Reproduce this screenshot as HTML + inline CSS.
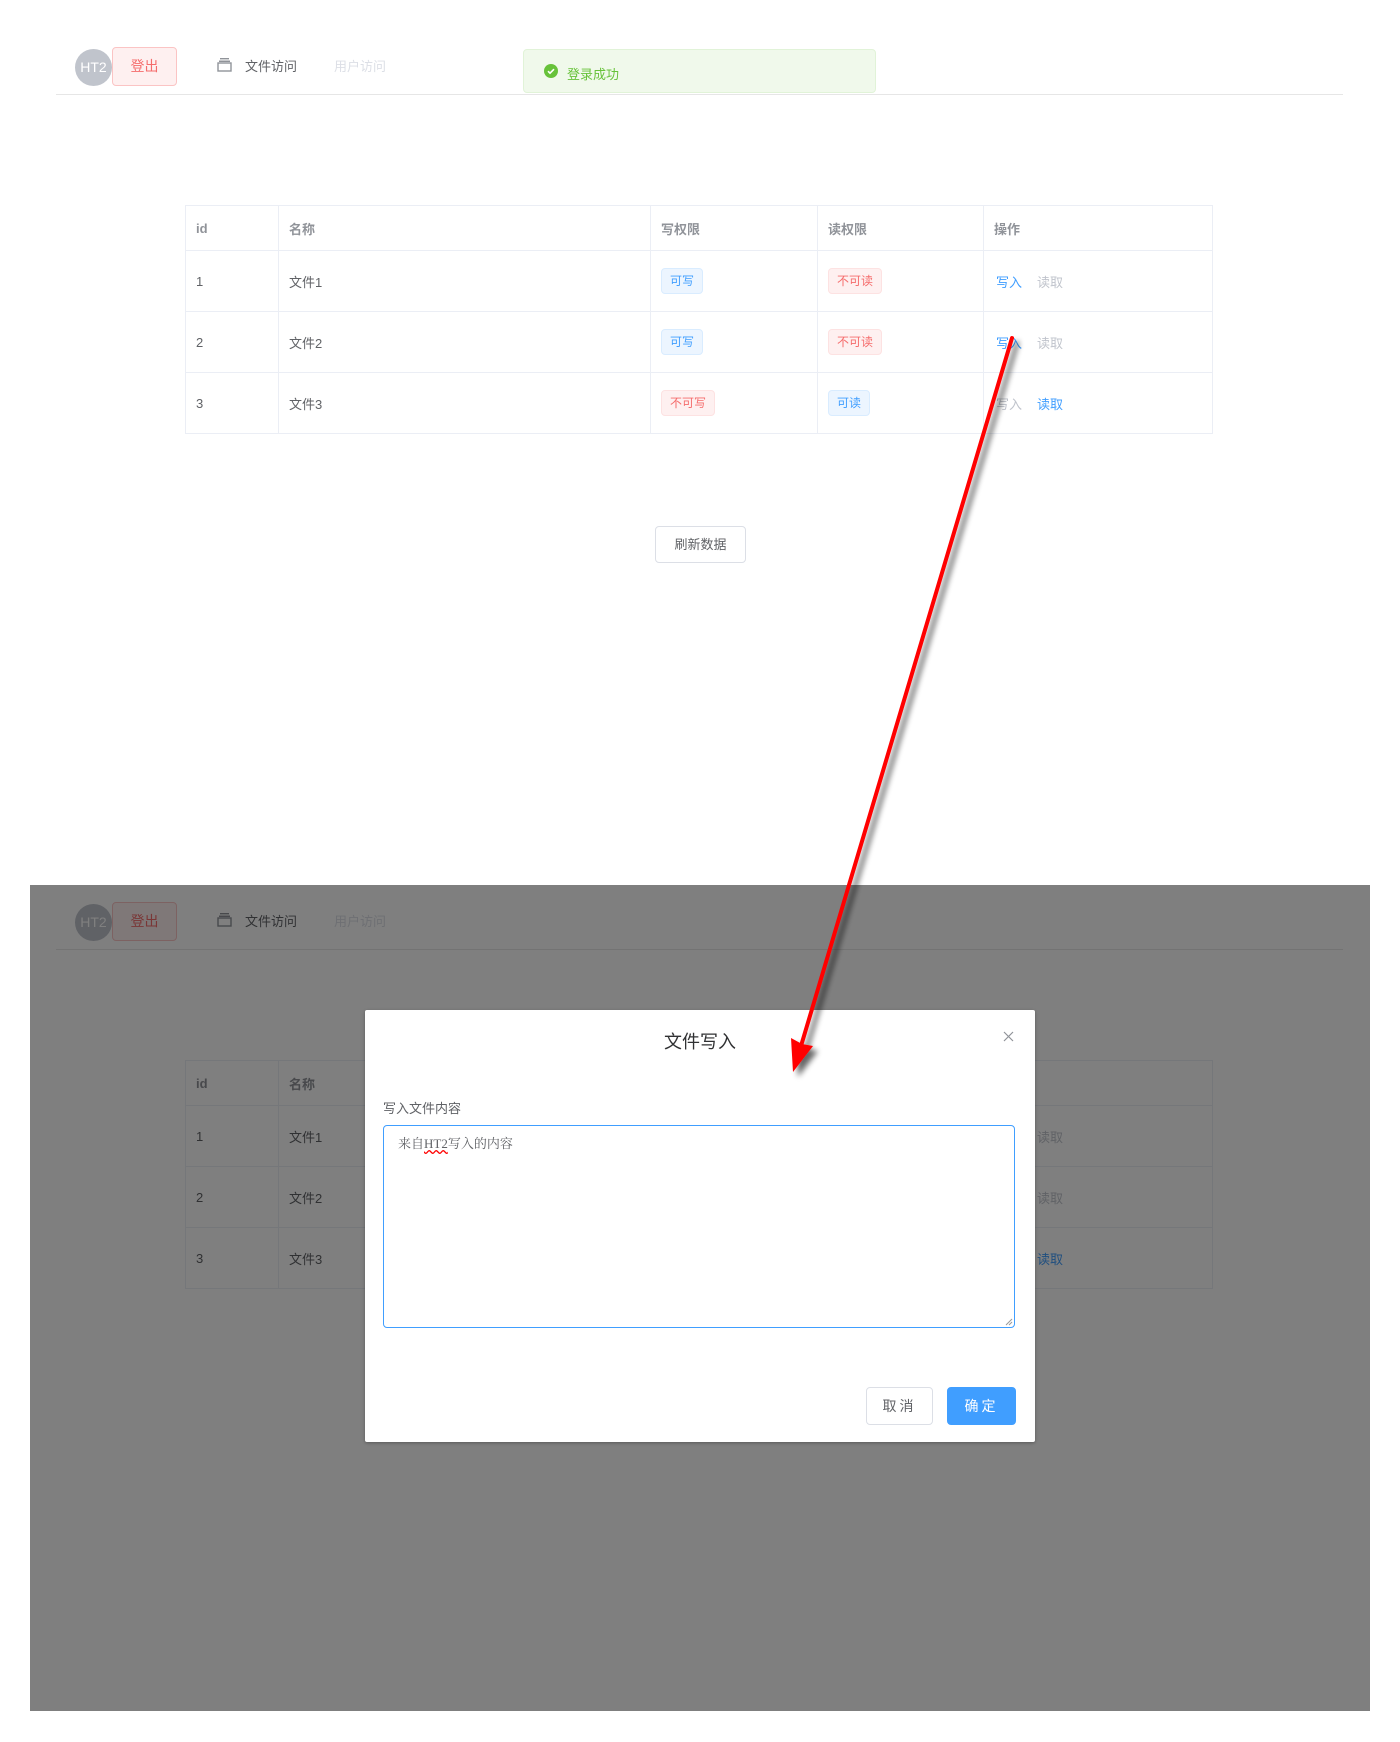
<!DOCTYPE html>
<html><head><meta charset="utf-8">
<style>
*{box-sizing:border-box;margin:0;padding:0}
body{width:1400px;height:1742px;background:#fff;position:relative;overflow:hidden;font-family:"Liberation Sans","Noto Sans CJK SC",sans-serif;color:#606266;font-size:14px}
.abs{position:absolute}
.page{position:absolute;left:0;top:0;width:1400px;height:900px}
.avatar{left:75px;top:49px;width:37px;height:37px;border-radius:50%;background:#c0c4cc;color:#fff;font-size:14px;line-height:37px;text-align:center}
.logout{left:112px;top:47px;width:65px;height:39px;border:1px solid #fbc4c4;background:#fef0f0;color:#f56c6c;border-radius:4px;text-align:center;line-height:37px;font-size:14px}
.nav1{left:245px;top:56px;font-size:13px;color:#606266}
.nav2{left:334px;top:56px;font-size:13px;color:#dcdfe6}
.icon{left:217px;top:58px;width:15px;height:14px}
.hline{left:56px;top:94px;width:1287px;height:1px;background:#e6e6e6}
table{position:absolute;left:185px;top:205px;width:1028px;border-collapse:collapse;border:1px solid #ebeef5;font-size:13px}
td,th{border-right:1px solid #ebeef5;border-bottom:1px solid #ebeef5;text-align:left;padding-left:10px;font-weight:normal}
th{height:45px;color:#909399;font-weight:bold}
td{height:61px}
.tag{display:inline-block;height:26px;line-height:24px;padding:0 8px;font-size:12px;border-radius:4px;border:1px solid}
.b{background:#ecf5ff;border-color:#d9ecff;color:#409eff}
.r{background:#fef0f0;border-color:#fde2e2;color:#f56c6c}
.lb{color:#409eff}.lg{color:#c0c4cc}
.op span:first-child{margin-left:2px;margin-right:15px}
.refresh{left:655px;top:526px;width:91px;height:37px;border:1px solid #dcdfe6;border-radius:4px;text-align:center;line-height:35px;font-size:13px;color:#606266}
.msg{left:523px;top:49px;width:353px;height:44px;background:#f0f9eb;border:1px solid #e1f3d8;border-radius:4px}
.clip{left:30px;top:885px;width:1340px;height:826px;overflow:hidden}
.overlay{left:0;top:0;width:1340px;height:826px;background:rgba(0,0,0,.5)}
.modal{left:365px;top:1010px;width:670px;height:432px;background:#fff;border-radius:2px;box-shadow:0 1px 3px rgba(0,0,0,.3)}
.btn{position:absolute;height:38px;border-radius:4px;text-align:center;line-height:36px;font-size:14px;letter-spacing:3px}
</style></head><body>

<div class="page" id="p1">
<div class="abs avatar">HT2</div>
<div class="abs logout">登出</div>
<svg class="abs icon" viewBox="0 0 15 14"><rect x="1" y="5" width="13" height="8" fill="none" stroke="#909399" stroke-width="1.4"/><rect x="2" y="2.5" width="11" height="1.5" fill="#909399"/><rect x="3" y="0" width="9" height="1.4" fill="#909399"/></svg>
<div class="abs nav1">文件访问</div>
<div class="abs nav2">用户访问</div>
<div class="abs hline"></div>
<table>
<tr><th style="width:93px">id</th><th style="width:372px">名称</th><th style="width:167px">写权限</th><th style="width:166px">读权限</th><th>操作</th></tr>
<tr><td>1</td><td>文件1</td><td><span class="tag b">可写</span></td><td><span class="tag r">不可读</span></td><td class="op"><span class="lb">写入</span><span class="lg">读取</span></td></tr>
<tr><td>2</td><td>文件2</td><td><span class="tag b">可写</span></td><td><span class="tag r">不可读</span></td><td class="op"><span class="lb">写入</span><span class="lg">读取</span></td></tr>
<tr><td>3</td><td>文件3</td><td><span class="tag r">不可写</span></td><td><span class="tag b">可读</span></td><td class="op"><span class="lg">写入</span><span class="lb">读取</span></td></tr>
</table>
<div class="abs refresh">刷新数据</div>
</div>

<div class="abs msg">
<svg class="abs" style="left:20px;top:14px" width="14" height="14" viewBox="0 0 14 14"><circle cx="7" cy="7" r="7" fill="#67c23a"/><path d="M4 7.2l2 2 4-4" stroke="#fff" stroke-width="1.6" fill="none"/></svg>
<div class="abs" style="left:43px;top:14px;color:#67c23a;font-size:13px">登录成功</div>
</div>

<div class="abs clip">
<div class="page" style="left:-30px;top:-30px">
<div class="abs avatar">HT2</div>
<div class="abs logout">登出</div>
<svg class="abs icon" viewBox="0 0 15 14"><rect x="1" y="5" width="13" height="8" fill="none" stroke="#909399" stroke-width="1.4"/><rect x="2" y="2.5" width="11" height="1.5" fill="#909399"/><rect x="3" y="0" width="9" height="1.4" fill="#909399"/></svg>
<div class="abs nav1">文件访问</div>
<div class="abs nav2">用户访问</div>
<div class="abs hline"></div>
<table>
<tr><th style="width:93px">id</th><th style="width:372px">名称</th><th style="width:167px">写权限</th><th style="width:166px">读权限</th><th>操作</th></tr>
<tr><td>1</td><td>文件1</td><td><span class="tag b">可写</span></td><td><span class="tag r">不可读</span></td><td class="op"><span class="lb">写入</span><span class="lg">读取</span></td></tr>
<tr><td>2</td><td>文件2</td><td><span class="tag b">可写</span></td><td><span class="tag r">不可读</span></td><td class="op"><span class="lb">写入</span><span class="lg">读取</span></td></tr>
<tr><td>3</td><td>文件3</td><td><span class="tag r">不可写</span></td><td><span class="tag b">可读</span></td><td class="op"><span class="lg">写入</span><span class="lb">读取</span></td></tr>
</table>
</div>
<div class="abs overlay"></div>
</div>

<div class="abs modal">
<div class="abs" style="left:0;width:670px;top:18px;text-align:center;font-size:18px;color:#303133">文件写入</div>
<svg class="abs" style="left:638px;top:21px" width="11" height="11" viewBox="0 0 11 11"><path d="M1 1l9 9M10 1l-9 9" stroke="#909399" stroke-width="1.2"/></svg>
<div class="abs" style="left:18px;top:88px;font-size:13px;color:#606266">写入文件内容</div>
<div class="abs" style="left:18px;top:115px;width:632px;height:203px;border:1px solid #409eff;border-radius:4px">
<div class="abs" style="left:14px;top:7px;font-family:'Liberation Serif','Noto Serif CJK SC',serif;font-size:13px;color:#606266">来自<span style="text-decoration:underline wavy red">HT2</span>写入的内容</div>
<svg class="abs" style="right:1px;bottom:1px" width="8" height="8"><path d="M7 1L1 7M7 4L4 7" stroke="#999" stroke-width="1"/></svg>
</div>
<div class="btn" style="left:501px;top:377px;width:67px;border:1px solid #dcdfe6;color:#606266;background:#fff">取消</div>
<div class="btn" style="left:582px;top:377px;width:69px;background:#409eff;border:1px solid #409eff;color:#fff">确定</div>
</div>

<svg class="abs" style="left:0;top:0" width="1400" height="1742">
<defs><filter id="sh" x="-50%" y="-10%" width="200%" height="120%"><feGaussianBlur in="SourceAlpha" stdDeviation="3"/><feOffset dx="5" dy="5"/><feComponentTransfer><feFuncA type="linear" slope="0.6"/></feComponentTransfer><feMerge><feMergeNode/><feMergeNode in="SourceGraphic"/></feMerge></filter></defs>
<g filter="url(#sh)">
<line x1="1012" y1="338" x2="801" y2="1046" stroke="#ff0000" stroke-width="4" stroke-linecap="round"/>
<polygon points="791,1038 793,1072 813,1046 802,1044" fill="#ff0000"/>
</g>
</svg>
</body></html>
